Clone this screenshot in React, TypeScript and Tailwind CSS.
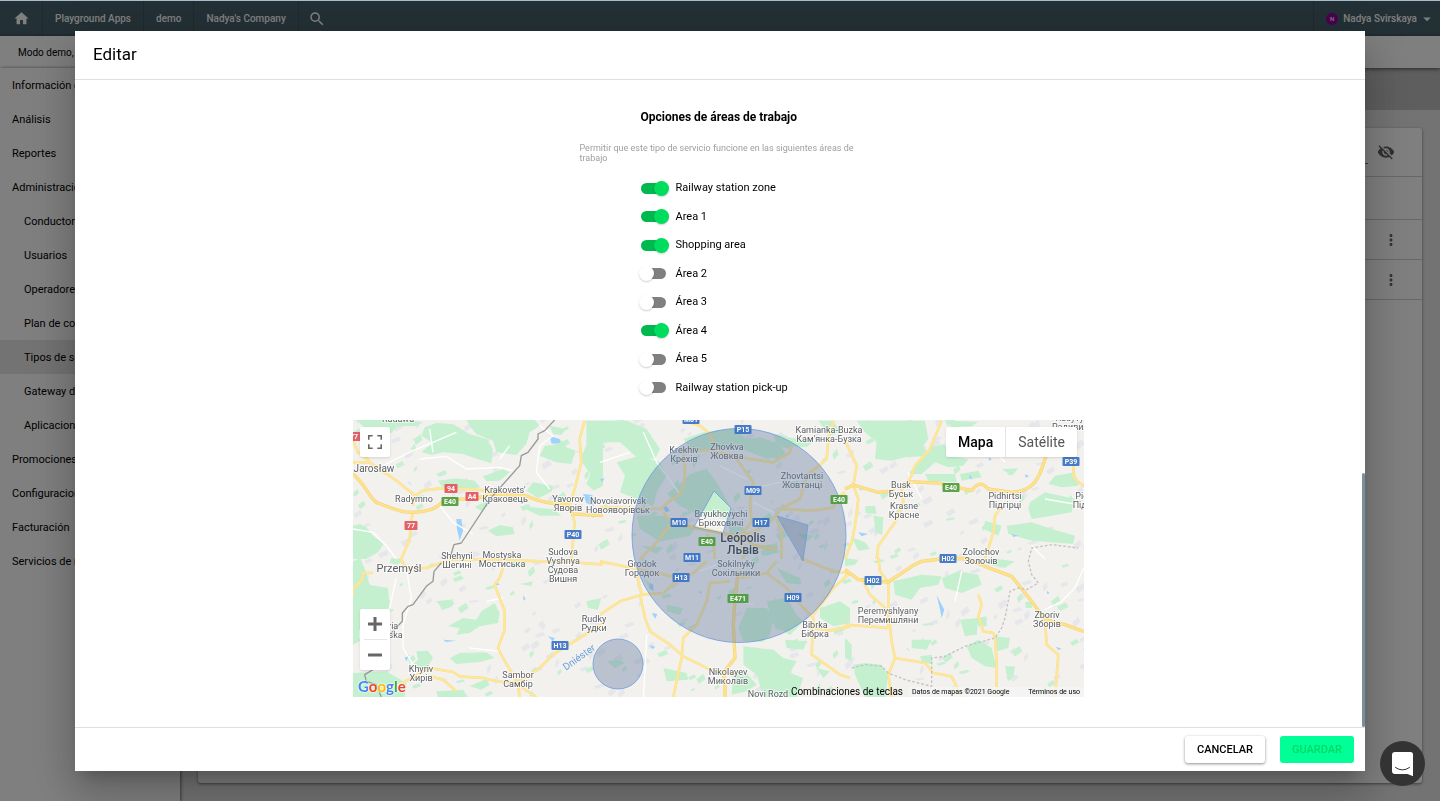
import { useState } from "react";
import {
  MdArrowDropDown,
  MdHome,
  MdMoreVert,
  MdSearch,
  MdVisibilityOff,
} from "react-icons/md";

const menu = [
  { name: "Información de la compañía" },
  { name: "Análisis" },
  { name: "Reportes" },
  { name: "Administración" },
  { name: "Conductores", child: true },
  { name: "Usuarios", child: true },
  { name: "Operadores", child: true },
  { name: "Plan de contrato", child: true },
  { name: "Tipos de servicio", child: true, active: true },
  { name: "Gateway de pago", child: true },
  { name: "Aplicaciones", child: true },
  { name: "Promociones" },
  { name: "Configuraciones" },
  { name: "Facturación" },
  { name: "Servicios de red" },
];

const workAreas = [
  { name: "Railway station zone", on: true },
  { name: "Area 1", on: true },
  { name: "Shopping area", on: true },
  { name: "Área 2", on: false },
  { name: "Área 3", on: false },
  { name: "Área 4", on: true },
  { name: "Área 5", on: false },
  { name: "Railway station pick-up", on: false },
];

// map terrain, one entry per tile, drawn at 3x and scaled down
const tiles = [
  {
    at: "translate(0 -3)",
    forest:
      "M10 3H180L165 20 130 24 118 40 92 52 84 34 50 40 28 20ZM215 25L250 12 300 15 350 45 400 60 420 90 415 133 380 122 330 105 270 100 235 108 205 98 240 72 205 50ZM340 3H545L560 20 530 40 520 75 490 108 430 100 420 65 370 45 350 20ZM255 185L310 178 365 185 382 205 340 214 270 208ZM390 172L450 150 470 160 440 185 400 187ZM575 80L600 78 625 62 640 85 668 95 655 135 610 130 560 110ZM700 5H750V200L722 215 700 195 712 165 680 120 700 80ZM0 320L20 315 40 325 60 350 92 375 75 400 40 420H0ZM405 335L440 318 480 325 485 345 430 352ZM540 190L600 200 595 218 555 238 520 215ZM365 265L400 245 412 255 385 275ZM500 262L600 270 625 290 560 290ZM590 20L640 30 625 48 600 45ZM130 0L210 10 190 22 150 20Z",
    roads:
      "M0 130L50 130 80 150 130 185 180 225 180 260M180 235L210 215 260 208 340 210 410 215M178 285L170 360 145 420M695 5L680 60 685 130 665 210 650 260 665 310 655 420M0 65L15 100 50 125",
    major:
      "M0 165C40 200 45 230 70 250C120 270 160 290 220 275C270 265 250 245 300 240C330 240 370 245 410 225L520 230C560 250 600 255 640 255L660 285 750 290",
    water:
      "M310 300L325 300 330 335 320 365 312 330ZM590 52L620 60 622 72 596 74ZM690 225L718 228 722 262 700 252ZM165 185L178 200 168 192Z",
    border:
      "M605 3L575 35 555 45 555 60 525 100 505 110 500 140 415 235 325 372 303 377 290 420",
    paths:
      "M90 140L180 95 240 70 310 40M200 120L280 112 340 150 440 145 480 155M240 100L230 30M440 120L470 80M560 20L600 50 560 80 550 160 590 210M0 330L60 340 100 380 130 420M260 260L300 310 360 345",
  },
  {
    at: "translate(0 414)",
    forest:
      "M0 10L22 0 40 45 50 80 105 90 110 150 70 165 40 200 20 250 0 260ZM285 205L330 180 370 185 385 160 425 135 440 165 435 195 380 205 350 225 310 230 320 210ZM250 130L290 125 298 145 270 155ZM190 280L225 278 240 300 220 332 180 320 195 305ZM290 300L320 285 400 283 425 300 380 312 310 318ZM350 385L400 362 410 380 385 395ZM475 5L520 8 515 30 480 28ZM0 345L100 340 160 375 155 417H0ZM250 400L330 395 345 417H255ZM700 130L745 120 735 155 705 150ZM115 0L150 5 135 20 110 15ZM500 78L540 70 535 84Z",
    roads:
      "M60 45L30 45 25 70 0 90 0 110M140 0L160 30 220 30 290 5 420 5 570 10 650 12 750 20M450 30L440 60 425 80 440 120 455 160 455 215 435 270 450 300 495 375 500 417M130 385L230 330 300 342 320 355 390 360 430 370 495 375 560 330 600 290 680 240 750 195M495 380L550 417M230 355L270 365 310 400M40 400L130 385",
    major: "",
    water:
      "M270 245L310 248 280 252ZM585 235L605 240 600 250ZM510 112L518 122 512 128ZM430 70L440 80 428 82ZM155 300L170 290 160 310Z",
    border:
      "M265 15L243 40 240 70 220 85 180 140 165 145 148 165 148 190 110 230M60 335L35 350 40 370 70 380 85 417",
    paths:
      "M160 30L175 120 150 200 150 270 180 320M130 60L110 150M400 130L450 120M440 280L350 270",
  },
  {
    at: "translate(741 -3)",
    forest:
      "M0 5L80 5 140 30 180 90 165 120 110 115 60 70 0 70ZM50 130L120 110 180 130 200 170 170 220 160 262 60 220 75 170ZM110 290L200 290 215 310 290 320 270 350 180 368 120 330ZM245 190L270 165 320 150 350 190 395 270 380 300 300 290 240 260 200 225ZM250 60L310 40 400 28 440 60 480 55 540 75 560 110 500 120 440 95 380 90 330 95 270 90ZM520 45L560 50 570 90 530 80ZM385 320L430 325 440 345 390 345ZM655 5H700L720 40 690 50ZM540 50L640 68 620 84 560 82ZM590 340L640 350 620 370ZM480 380L520 375 540 400 500 410ZM120 380L190 385 170 405Z",
    roads:
      "M250 5L300 20 330 45 340 70M700 5L685 60 680 120 620 170 600 240 540 270 520 300 460 340 430 345M250 100C260 160 255 200 240 225C200 250 190 260 185 270L0 265M190 280L215 310M330 95L410 120 460 190 450 250 455 310 420 350M250 95L330 95 450 120 520 130 570 100 575 82M540 270L640 275 700 265 712 235 735 220M530 300L545 340 545 420M320 345L340 370 345 420M185 345L210 320M400 345L430 390 430 420M215 315L170 370 120 420",
    major: "M215 315L281 325 370 343 440 360 460 380 530 390",
    water:
      "M185 262L200 262 210 275 198 280ZM555 288L568 290 562 296ZM120 235L135 240 128 248ZM0 180L14 178 6 190Z",
    border: "",
    paths:
      "M130 40L170 130 240 225M450 210L540 190 610 180M360 140L440 180M90 100L0 130M460 250L520 280",
  },
  {
    at: "translate(741 414)",
    forest:
      "M440 150L500 150 520 180 510 230 490 252 430 250 415 210ZM500 130L560 120 590 170 610 190 570 232 520 200ZM530 30L600 60 605 80 560 75ZM430 265L520 275 550 300 590 310 570 345 610 360 590 417H490L470 350 430 320ZM400 350L440 345 470 380 440 400 395 410ZM555 245L620 250 610 275 560 270ZM660 150L720 130 750 150V195L700 205 660 180ZM190 330L260 345 265 365 200 370ZM200 140L250 150 240 170 200 160ZM20 310L60 305 75 315 45 330ZM130 60L160 85 150 95ZM650 330L690 340 670 360ZM260 210L290 195 280 215Z",
    roads:
      "M0 10L75 25 170 45 240 60M110 50L125 110 60 130 0 170M120 110L135 180 150 220 210 260 250 295 330 335 410 350M125 110L190 105 230 70 280 45 320 10M390 70L330 75 320 130 290 200 250 240 245 300 220 417M420 60L500 45 530 10M500 45L560 90 610 150 640 180 635 290 720 350 750 360M600 0L700 40 750 45M750 45L700 90 640 170M640 210L690 218 750 205",
    major: "M415 40L405 120 400 200 405 300 370 345 375 380 375 417",
    water:
      "M155 165L172 168 166 182ZM150 75L160 80 160 100 148 90ZM300 98L306 106 298 104ZM148 262L166 266 158 274Z",
    border: "",
    paths: "M140 230L135 340 130 417M410 130L460 140M300 40L350 20",
  },
  {
    at: "translate(1476 -3)",
    forest:
      "M35 5H240L250 60 235 80 250 110 180 115 140 125 90 120 95 70 60 40ZM255 85L300 75 310 110 370 120 355 140 310 145 270 130 230 165 190 165 220 130ZM345 165L400 155 410 175 350 185ZM240 165L330 165 335 190 250 185ZM555 250L600 220 690 240 680 280 620 290 560 300 550 270ZM485 320L560 310 620 330 690 350 685 375 560 365 490 345ZM420 305L470 320 460 350 415 330ZM60 262L90 260 95 285 62 282ZM20 355L60 370 75 390 40 395ZM85 290L115 295 112 348 92 340ZM630 170L690 160 700 200 650 205 610 195ZM310 5L400 8 380 22 320 24ZM470 150L520 148 500 170Z",
    roads:
      "M0 65L35 140 25 200 40 240 30 320 20 370 0 420M290 5L255 90 210 140 195 180 170 210 175 250 150 310 100 380 95 420M470 260L450 290 445 340 420 420M620 80L685 130 685 170 700 190 716 200",
    major:
      "M0 210L25 198 100 220 150 215M190 188L280 192 380 215C400 190 410 190 430 210L500 220C560 215 580 190 600 120L615 85",
    water:
      "M375 165L382 182 372 176ZM430 115L440 120 434 126ZM40 340L70 345 50 352ZM540 165L552 172 542 176ZM500 345L520 350 505 354Z",
    border: "",
    paths: "M300 60L420 70 480 130M190 160L230 240M560 380L600 420M600 240L716 260",
  },
  {
    at: "translate(1476 414)",
    forest:
      "M145 70L230 50 290 55 280 80 225 90 200 125 150 110ZM290 60L340 40 400 50 410 80 350 105 300 90ZM345 185L400 180 395 230 360 235ZM395 180L425 175 425 205 400 205ZM200 245L260 245 245 275 200 270ZM365 265L400 245 440 270 455 330 420 325 380 300ZM450 235L495 240 490 270 455 280ZM25 320L60 315 110 320 130 355 120 417H60L30 350ZM0 240L20 260 20 310 0 300ZM480 325L510 325 505 355 485 350ZM225 295L260 290 262 320 230 310ZM0 0L40 5 30 20 0 25ZM430 0L510 10 480 30 440 22ZM540 132L560 130 562 150 542 150Z",
    roads:
      "M50 60L75 110 110 140 130 160 140 250 150 300 240 315 265 345 320 355 350 417M100 0L105 40 130 72 130 210M400 110L410 140 400 175 415 220 445 225 450 240 455 310 455 417M600 185L605 260 640 290 630 417M150 300L130 350 140 417M0 200L135 210",
    major:
      "M0 35L40 65 130 72 200 25 230 10 310 0 370 3 420 25 500 55 520 80 560 130 600 185 660 200 716 220",
    water:
      "M275 112L298 155 290 180 284 150ZM185 270L196 280 186 274ZM450 372L458 380 452 384ZM632 266L650 272 640 276ZM606 98L614 106 606 108Z",
    border: "",
    paths: "M600 155L650 130 690 90 716 30M130 160L40 170M350 40L330 130",
  },
];

const regionBorder =
  "M20 330L60 320 110 325 130 345 180 365 260 385 260 300 300 295 360 265 450 240 470 210 480 180 495 100 520 90 545 95 580 75 560 50 550 10 560 -30 620 -40 700 -30";

const towns: { at: [number, number]; lines: string[]; size?: number; bold?: boolean }[] = [
  { at: [45, 2], lines: ["Radawa"] },
  { at: [21, 52], lines: ["Jarosław"], size: 10 },
  { at: [61, 82], lines: ["Radymno"] },
  { at: [152, 73], lines: ["Krakovets'", "Краковець"] },
  { at: [215, 82], lines: ["Yavorov", "Яворів"] },
  { at: [265, 84], lines: ["Novoiavorivsk", "Новояворівськ"] },
  { at: [476, 13], lines: ["Kamianka-Buzka", "Кам'янка-Бузка"] },
  { at: [331, 33], lines: ["Krekhiv", "Крехів"] },
  { at: [374, 30], lines: ["Zhovkva", "Жовква"] },
  { at: [449, 59], lines: ["Zhovtantsi", "Жовтанці"] },
  { at: [368, 97], lines: ["Bryukhovychi", "Брюховичі"] },
  { at: [390, 122], lines: ["Leópolis", "Львів"], size: 12, bold: true },
  { at: [383, 147], lines: ["Sokilnyky", "Сокільники"] },
  { at: [289, 147], lines: ["Grodok", "Городок"] },
  { at: [210, 135], lines: ["Sudova", "Vyshnya", "Судова", "Вишня"] },
  { at: [104, 139], lines: ["Shehyni", "Шегині"] },
  { at: [149, 138], lines: ["Mostyska", "Мостиська"] },
  { at: [46, 152], lines: ["Przemyśl"], size: 11 },
  { at: [28, 209], lines: ["Kalwaria", "Pacławska"] },
  { at: [241, 202], lines: ["Rudky", "Рудки"] },
  { at: [68, 252], lines: ["Khyriv", "Хирів"] },
  { at: [165, 258], lines: ["Sambor", "Самбір"] },
  { at: [375, 255], lines: ["Nikolayev", "Миколаїв"] },
  { at: [462, 208], lines: ["Bibrka", "Бібрка"] },
  { at: [415, 277], lines: ["Novi Rozd"] },
  { at: [535, 194], lines: ["Peremyshlyany", "Перемишляни"] },
  { at: [548, 68], lines: ["Busk", "Буськ"] },
  { at: [551, 89], lines: ["Krasne", "Красне"] },
  { at: [652, 79], lines: ["Pidhirtsi", "Підгірці"] },
  { at: [741, 79], lines: ["Pidkamin", "Підкамінь"] },
  { at: [721, 1], lines: ["Radyvyliv", "Радивилів"] },
  { at: [628, 135], lines: ["Zolochov", "Золочів"] },
  { at: [694, 198], lines: ["Zboriv", "Зборів"] },
];

const red = "#e2525d";
const green = "#4a9b3c";
const blue = "#3670c8";

const shields: [string, number, number, string][] = [
  ["77", 1, 16, red],
  ["94", 98, 68, red],
  ["A4", 119, 76, red],
  ["77", 58, 105, red],
  ["E40", 97, 81, green],
  ["P40", 220, 114, blue],
  ["M01", 338, -1, blue],
  ["P15", 390, 9, blue],
  ["M09", 400, 70, blue],
  ["E40", 486, 79, green],
  ["M10", 326, 102, blue],
  ["H17", 408, 102, blue],
  ["E40", 354, 121, green],
  ["M11", 339, 137, blue],
  ["H13", 328, 157, blue],
  ["E471", 385, 178, green],
  ["H09", 440, 177, blue],
  ["H13", 207, 225, blue],
  ["E40", 598, 67, green],
  ["P39", 718, 41, blue],
  ["H02", 595, 138, blue],
  ["H02", 520, 160, blue],
];

// small fields and villages spread over the terrain
function scatter(count: number, seed: number) {
  let n = seed;
  const next = () => {
    n = (n * 16807) % 2147483647;
    return n / 2147483647;
  };
  let d = "";
  for (let i = 0; i < count; i++) {
    const x = Math.round(next() * 2193);
    const y = Math.round(next() * 831);
    const w = Math.round(8 + next() * 18);
    const h = Math.round(5 + next() * 12);
    d += `M${x} ${y}l${w} ${-h}l${Math.round(w / 3)} ${h}l${-w} ${h}Z`;
  }
  return d;
}

const villages = scatter(300, 71);
const fields = scatter(150, 4242);

function MapDrawing() {
  return (
    <svg
      viewBox="0 0 731 277"
      preserveAspectRatio="xMidYMid slice"
      className="block h-full w-full bg-[#f2f1ee]"
      role="img"
      aria-label="Mapa de áreas de trabajo"
    >
      <g transform="scale(0.33333)" fill="none" strokeLinejoin="round">
        <path d={villages} fill="#e6e7ea" />
        <path d={fields} fill="#c6f0d1" />
        {tiles.map((tile) => (
          <g key={tile.at} transform={tile.at}>
            <path d={tile.forest} fill="#c5f0d0" />
            <path d={tile.water} fill="#9fd2fb" />
            <path d={tile.paths} stroke="#fff" strokeWidth="4" />
          </g>
        ))}
        {tiles.map((tile) => (
          <g key={tile.at} transform={tile.at}>
            <path d={tile.roads} stroke="#f9dd90" strokeWidth="8" />
            <path d={tile.roads} stroke="#fee798" strokeWidth="6" />
            <path d={tile.major} stroke="#f5d178" strokeWidth="10" />
            <path d={tile.major} stroke="#fde28a" strokeWidth="7" />
            <path d={tile.border} stroke="#999" strokeWidth="4" />
          </g>
        ))}
        <path
          d={regionBorder}
          transform="translate(1476 414)"
          stroke="#c2c2c2"
          strokeWidth="4"
          strokeDasharray="8 6"
        />
      </g>

      <g fontFamily="Roboto, sans-serif" textAnchor="middle">
        {towns.map((town) => (
          <text
            key={town.lines[0]}
            fontSize={town.size || 9}
            fontWeight={town.bold ? 500 : 400}
            fill={town.bold ? "#2b2b2b" : "#5c6066"}
            stroke="#ffffff"
            strokeOpacity="0.6"
            strokeWidth="2"
            paintOrder="stroke"
          >
            {town.lines.map((line, i) => (
              <tspan
                key={line}
                x={town.at[0]}
                y={town.at[1] + i * (town.bold ? 12 : 9)}
              >
                {line}
              </tspan>
            ))}
          </text>
        ))}
        <text
          fontSize="10"
          fill="#6a9fe0"
          transform="translate(228 240) rotate(-36)"
        >
          Dniéster
        </text>
      </g>

      <g fill="#667ca0" fillOpacity="0.4" stroke="#6d9be0" strokeOpacity="0.8">
        <path
          fillRule="evenodd"
          d="M279 115.500a107 107 0 1 0 214 0a107 107 0 1 0 -214 0ZM361 71L378 88 370 113 341 107Z"
        />
        <circle cx="265" cy="244" r="25" />
        <path d="M424 96L455 105 450 141Z" />
      </g>

      <g fontFamily="Roboto, sans-serif" textAnchor="middle" opacity="0.9">
        {shields.map(([name, x, y, color]) => {
          const width = name.length * 4 + 5;
          return (
            <g key={name + x}>
              <rect
                x={x - width / 2}
                y={y - 4}
                width={width}
                height="9"
                rx="1"
                fill={color}
              />
              <text x={x} y={y + 3} fontSize="7" fontWeight="700" fill="#fff">
                {name}
              </text>
            </g>
          );
        })}
      </g>
    </svg>
  );
}

function WorkAreaMap() {
  const [satellite, setSatellite] = useState(false);

  return (
    <div className="relative h-[277px] w-full max-w-[731px] overflow-hidden">
      <MapDrawing />

      <button
        aria-label="Pantalla completa"
        className="absolute top-[7px] left-[7px] flex size-[30px] items-center justify-center rounded-xs bg-white shadow"
      >
        <svg viewBox="0 0 18 18" className="size-[14px]" fill="#666">
          <path d="M0 0v6h2V2h4V0H0zm16 0h-4v2h4v4h2V0h-2zm0 16h-4v2h6v-6h-2v4zM2 12H0v6h6v-2H2v-4z" />
        </svg>
      </button>

      <div className="absolute top-[7px] right-[7px] flex h-[30px] rounded-xs bg-white text-[14px] shadow">
        <button
          onClick={() => setSatellite(false)}
          className={`border-r border-[#e6e6e6] px-3 ${satellite ? "text-[#565656]" : "font-medium text-black"}`}
        >
          Mapa
        </button>
        <button
          onClick={() => setSatellite(true)}
          className={`px-3 ${satellite ? "font-medium text-black" : "text-[#565656]"}`}
        >
          Satélite
        </button>
      </div>

      <div className="absolute bottom-[27px] left-[7px] flex w-[30px] flex-col items-center rounded-xs bg-white shadow">
        <button
          aria-label="Acercar"
          className="flex size-[30px] items-center justify-center"
        >
          <svg viewBox="0 0 14 14" className="size-[14px]" fill="#666">
            <path d="M5.500 0h3v5.500H14v3H8.500V14h-3V8.500H0v-3h5.500z" />
          </svg>
        </button>
        <span className="h-px w-[23px] bg-[#e6e6e6]" />
        <button
          aria-label="Alejar"
          className="flex size-[30px] items-center justify-center"
        >
          <svg viewBox="0 0 14 14" className="size-[14px]" fill="#666">
            <path d="M0 5.500h14v3H0z" />
          </svg>
        </button>
      </div>

      <a
        href="#google"
        aria-label="Google"
        className="absolute bottom-px left-[5px] font-['Lato',sans-serif] text-[15px] leading-[20px] font-bold [text-shadow:0_0_2px_white,0_0_2px_white]"
      >
        <span className="text-[#4285f4]">G</span>
        <span className="text-[#ea4335]">o</span>
        <span className="text-[#fbbc05]">o</span>
        <span className="text-[#4285f4]">g</span>
        <span className="text-[#34a853]">l</span>
        <span className="text-[#ea4335]">e</span>
      </a>

      <div className="absolute right-0 bottom-0 flex items-end text-black">
        <button className="mr-[5px] text-[10px] leading-[10px]">
          Combinaciones de teclas
        </button>
        <div className="flex w-[176px] justify-between bg-[#f5f5f5]/80 px-1 text-[7px] leading-[10px]">
          <span>Datos de mapas ©2021 Google</span>
          <a href="#terms">Términos de uso</a>
        </div>
      </div>
    </div>
  );
}

function EditDialog() {
  const [areas, setAreas] = useState(workAreas);

  function toggle(index: number) {
    setAreas(areas.map((a, i) => (i === index ? { ...a, on: !a.on } : a)));
  }

  return (
    <div className="fixed inset-0 z-10 flex bg-black/50 px-[75px] pt-[31px] pb-[30px]">
      <section
        role="dialog"
        aria-labelledby="dialog-title"
        className="flex w-full flex-col bg-white shadow-[0_11px_15px_-7px_rgba(0,0,0,0.2),0_24px_38px_3px_rgba(0,0,0,0.14),0_9px_46px_8px_rgba(0,0,0,0.12)]"
      >
        <header className="border-b border-[#e0e0e0] px-[18px] pt-[11px] pb-[13px]">
          <h2 id="dialog-title" className="text-[17px] leading-[24px]">
            Editar
          </h2>
        </header>

        <div className="flex min-h-0 flex-1 overflow-hidden">
          <div className="flex flex-1 flex-col items-center">
            <div className="flex w-[278px] flex-col pt-[29px]">
              <h3 className="pl-[61px] text-[12px] leading-[16px] font-bold whitespace-nowrap">
                Opciones de áreas de trabajo
              </h3>
              <p className="mt-[18px] mb-[11px] text-[9px] leading-[10px] text-[#9e9e9e]">
                Permitir que este tipo de servicio funcione en las siguientes
                áreas de trabajo
              </p>
              <ul className="grid h-[228px] auto-rows-fr pl-[61px]">
                {areas.map((area, i) => (
                  <li key={area.name} className="flex items-center">
                    <label className="flex items-center gap-[10px] text-[11px] leading-[14px]">
                      <input
                        type="checkbox"
                        checked={area.on}
                        onChange={() => toggle(i)}
                        className="relative h-[11px] w-[25px] appearance-none rounded-full bg-[#808080] before:absolute before:-top-[2px] before:-left-[2px] before:size-[15px] before:rounded-full before:bg-white before:shadow-[0_1px_2px_rgba(0,0,0,0.2)] checked:bg-[#00b94e] checked:before:left-[13px] checked:before:bg-[#00dd5e]"
                      />
                      {area.name}
                    </label>
                  </li>
                ))}
              </ul>
            </div>
            <div className="mt-[18px] flex w-full justify-center">
              <WorkAreaMap />
            </div>
          </div>
          <div className="flex w-[3px] flex-col justify-end">
            <div className="h-[254px] rounded-xs bg-[#78909c]" />
          </div>
        </div>

        <footer className="flex justify-end gap-[15px] border-t border-[#e0e0e0] px-[11px] py-2 text-[11px] leading-[27px] font-medium">
          <button className="rounded-[3px] bg-white px-3 shadow-[0_1px_3px_rgba(0,0,0,0.45)]">
            CANCELAR
          </button>
          <button className="rounded-[3px] bg-[#00ff96] px-3 text-[#00d966]">
            GUARDAR
          </button>
        </footer>
      </section>
    </div>
  );
}

export default function App() {
  return (
    <div className="flex h-screen flex-col overflow-hidden bg-[#e6e6e6] font-['Roboto',sans-serif] text-[11px] text-black">
      <div className="relative z-20 h-px bg-[#a9bccb]" />
      <nav className="relative flex h-[35px] shrink-0 items-stretch bg-[#46606a] text-[10px] font-medium text-white shadow-[0_1px_4px_rgba(0,0,0,0.6)]">
        <a
          href="#home"
          aria-label="Inicio"
          className="flex w-[43px] items-center justify-center border-r border-[#3d545e]"
        >
          <MdHome className="size-[17px]" />
        </a>
        <a href="#apps" className="flex items-center border-r border-[#3d545e] px-3">
          Playground Apps
        </a>
        <a href="#demo" className="flex items-center border-r border-[#3d545e] px-3">
          demo
        </a>
        <a href="#company" className="flex items-center border-r border-[#3d545e] px-3">
          Nadya's Company
        </a>
        <button aria-label="Buscar" className="px-[9px]">
          <MdSearch className="size-[18px]" />
        </button>
        <button className="ml-auto flex items-center border-l border-[#3d545e] pr-1 pl-3">
          <span className="flex size-3 items-center justify-center rounded-full bg-[#96009e] text-[6px]">
            N
          </span>
          <span className="ml-[5px]">Nadya Svirskaya</span>
          <MdArrowDropDown className="ml-px size-[18px]" />
        </button>
      </nav>

      <div className="relative h-8 shrink-0 bg-white pl-[18px] text-[10px] leading-[33px] shadow-[0_1px_4px_rgba(0,0,0,0.6)]">
        Modo demo, los datos no son reales
      </div>

      <div className="flex min-h-0 flex-1">
        <aside className="relative w-[180px] bg-white shadow-[1px_0_3px_rgba(0,0,0,0.5)]">
          {menu.map((item) => (
            <a
              key={item.name}
              href="#menu"
              className={`block h-[34px] leading-[36px] whitespace-nowrap ${item.child ? "pl-6" : "pl-3"} ${item.active ? "bg-[#e6e6e6]" : ""}`}
            >
              {item.name}
            </a>
          ))}
        </aside>

        <main className="flex flex-1 flex-col">
          <div className="h-[42px] bg-[#bdbdbd]" />
          <div className="mx-[18px] mt-[18px] mb-[18px] flex-1 rounded-[3px] bg-white text-[#616161] shadow-[0_1px_3px_rgba(0,0,0,0.5)]">
            <div className="flex h-[49px] items-center justify-end gap-[9px] border-b border-[#cfcfcf] pr-[27px]">
              <input
                aria-label="Buscar servicio"
                className="mt-1 h-5 w-[160px] border-b border-[#777]"
              />
              <MdVisibilityOff className="size-[18px]" />
            </div>
            <div className="h-[43px] border-b border-[#cfcfcf]" />
            {[1, 2].map((row) => (
              <div
                key={row}
                className="flex h-10 items-center justify-end border-b border-[#cfcfcf] pr-[22px]"
              >
                <button aria-label="Más opciones">
                  <MdMoreVert className="size-[18px]" />
                </button>
              </div>
            ))}
          </div>
        </main>
      </div>

      <EditDialog />

      <button
        aria-label="Abrir chat"
        className="fixed right-[15px] bottom-[15px] z-20 flex size-[45px] items-center justify-center rounded-full bg-[#333]"
      >
        <svg viewBox="0 0 21 24" className="h-[24px] w-[21px]">
          <path
            fill="#fff"
            d="M3 0H18.500Q21 0 21 2.500V24.200L15.500 22H3Q0 22 0 19V3Q0 0 3 0Z"
          />
          <path
            d="M3.500 15.500Q10.500 20.500 17.500 15.500"
            fill="none"
            stroke="#333"
            strokeLinecap="round"
            strokeWidth="1"
          />
        </svg>
      </button>
    </div>
  );
}
